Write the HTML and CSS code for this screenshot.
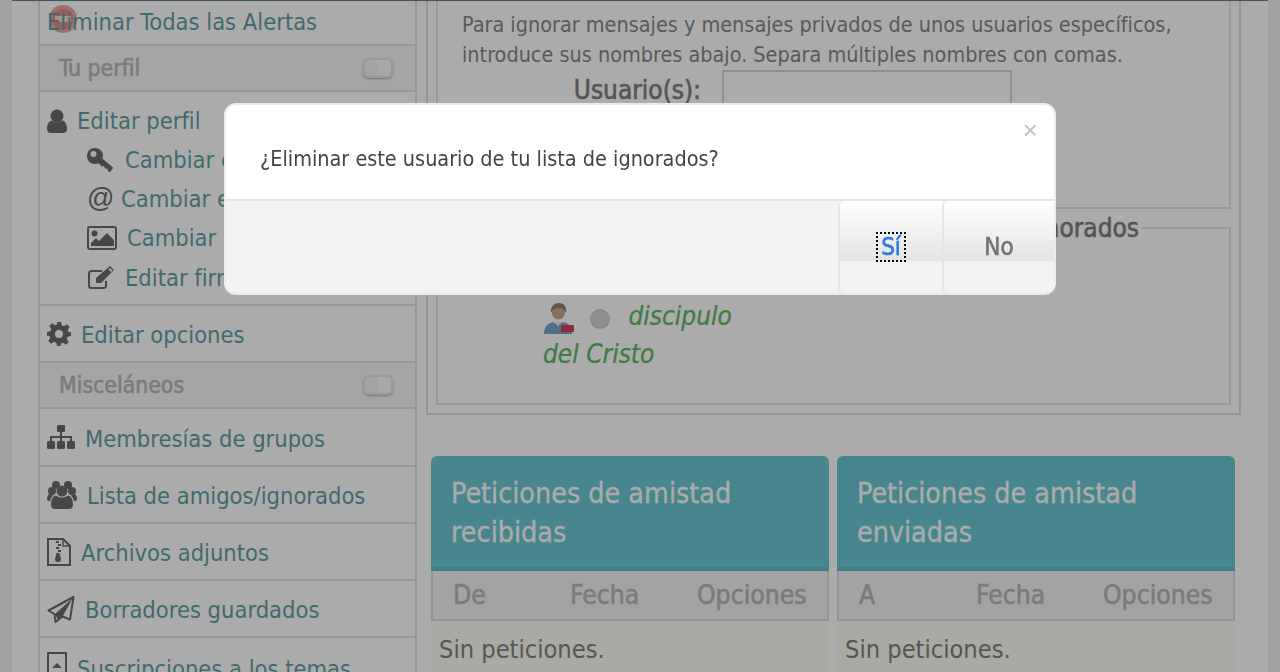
FILE: index.html
```html
<!DOCTYPE html>
<html lang="es">
<head>
  <meta charset="UTF-8" />
  <meta name="viewport" content="width=device-width, initial-scale=1.0" />
  <title>Lista de amigos/ignorados</title>
  <link rel="stylesheet" href="styles.css">
</head>
<body>
  <div class="page">
    <div class="layout">
      <aside class="sidebar">
        <div class="row first-row">
          <svg class="alert-icon" viewBox="0 0 28 28"><circle cx="14" cy="14" r="14" fill="#f0a9a0"/><circle cx="14" cy="14" r="10.500" fill="#e58c82"/><rect x="6" y="11" width="16" height="6" fill="#f6d8d4"/></svg>
          <a class="link">Eliminar Todas las Alertas</a>
        </div>
        <div class="section-head">
          <span>Tu perfil</span>
          <span class="toggle"></span>
        </div>
        <div class="row group">
          <div class="group-main">
            <svg class="icon" width="20" height="24" viewBox="0 0 20 24"><circle cx="10" cy="7" r="6.500"/><path d="M0 20c0-5 2-8 5-8.500 1.500 1.300 3 2 5 2s3.500-.7 5-2c3 .5 5 3.500 5 8.500 0 2.500-1.500 4-4 4H4c-2.500 0-4-1.500-4-4z"/></svg>
            <a class="link">Editar perfil</a>
          </div>
          <div class="sub sub-key">
            <svg class="icon" width="27" height="24" viewBox="0 0 27 24"><path fill-rule="evenodd" d="M8 0c4.500 0 8 3.200 8 7.500 0 1.100-.2 2-.6 2.900L26 19.500l-.5 1.500-2.500 3-1.500-.3-1.500-3.200-2 .2-1-2.600-2.300.3-3.200-3.200c-1 .5-2.200.8-3.500.8C3.500 16 0 12.500 0 8s3.500-8 8-8zM6.500 3a3 3 0 1 0 0 6 3 3 0 0 0 0-6z"/></svg>
            <a class="link">Cambiar contraseña</a>
          </div>
          <div class="sub">
            <span class="at">@</span>
            <a class="link">Cambiar email</a>
          </div>
          <div class="sub">
            <svg class="icon" width="30" height="24" viewBox="0 0 30 24"><rect x="1" y="1" width="28" height="22" rx="2" fill="none" stroke-width="2"/><circle cx="7.500" cy="7.500" r="3"/><path d="M4 20v-3l5-5 3 3 8-8 7 7v6z"/></svg>
            <a class="link">Cambiar avatar</a>
          </div>
          <div class="sub sub-last">
            <svg class="icon" width="28" height="24" viewBox="0 0 28 24"><path d="M19 15v4.500a2.500 2.500 0 0 1-2.500 2.500h-12A2.500 2.500 0 0 1 2 19.500v-12A2.500 2.500 0 0 1 4.500 5H15" fill="none" stroke-width="2"/><path d="M9 12l0 5 5 0L27 4l-4-4zM23 2l2.500 2.500-1.500 1.500-2.500-2.500z" fill-rule="evenodd"/></svg>
            <a class="link">Editar firma</a>
          </div>
        </div>
        <div class="row">
          <svg class="icon" width="24" height="24" viewBox="0 0 24 24"><path fill-rule="evenodd" d="M10 0h4l.7 3.300 2.300 1L20 2.300 22.700 5 20.700 8l1 2.300L24 10v4l-3.300.7-1 2.300 2 3-2.700 2.700-3-2-2.300 1L14 24h-4l-.7-3.300-2.300-1-3 2L1.300 19l2-3-1-2.300L0 14v-4l3.300-.7 1-2.300-2-3L5 1.300l3 2 2.300-1zM12 8a4 4 0 1 0 0 8 4 4 0 0 0 0-8z"/></svg>
          <a class="link">Editar opciones</a>
        </div>
        <div class="section-head">
          <span>Misceláneos</span>
          <span class="toggle"></span>
        </div>
        <div class="row row-tall">
          <svg class="icon" width="28" height="24" viewBox="0 0 28 24"><rect x="10" y="0" width="8" height="7" rx="1"/><rect x="0" y="16" width="8" height="8" rx="1.500"/><rect x="10" y="16" width="8" height="8" rx="1.500"/><rect x="20" y="16" width="8" height="8" rx="1.500"/><path d="M13 7h2v4h10v5h-2v-3h-8v3h-2v-3H5v3H3v-5h10z"/></svg>
          <a class="link">Membresías de grupos</a>
        </div>
        <div class="row">
          <svg class="icon" width="30" height="28" viewBox="0 0 30 28"><circle cx="5" cy="10" r="4"/><circle cx="25" cy="10" r="4"/><circle cx="9" cy="4" r="4"/><circle cx="21" cy="4" r="4"/><circle cx="15" cy="10" r="5.500"/><path d="M4 24c0-6 2-9 5-9.500 2 1.500 4 2 6 2s4-.5 6-2c3 .5 5 3.500 5 9.500 0 2.500-1.500 4-4 4H8c-2.500 0-4-1.500-4-4z"/><path d="M0 18c0-3 1.500-5 3-5 1 1 2 1.200 3 1.200C4.500 16 3.500 18 3.200 20 1 20 0 19.500 0 18zM30 18c0-3-1.500-5-3-5-1 1-2 1.200-3 1.200 1.500 1.800 2.500 3.800 2.800 5.800 2.200 0 3.200-.5 3.200-2z"/></svg>
          <a class="link">Lista de amigos/ignorados</a>
        </div>
        <div class="row">
          <svg class="icon" width="24" height="28" viewBox="0 0 24 28"><path d="M1 1h15l7 7v19H1z" fill="none" stroke-width="2"/><path d="M16 1v7h7" fill="none" stroke-width="1.500"/><path d="M9 3h3v2H9zM11 6h3v2h-3zM9 9h3v2H9zM11 12h3v2h-3zM9.500 15h3l1.500 6a3 3 0 0 1-6 0z"/></svg>
          <a class="link">Archivos adjuntos</a>
        </div>
        <div class="row">
          <svg class="icon" width="28" height="28" viewBox="0 0 28 28"><path d="M1.500 15.500L26.500 2 23 24.500 15.500 21.500 8.500 27 7.500 19z" fill="none" stroke-width="2" stroke-linejoin="round"/><path d="M8 19L25.500 3.500 15.500 21.500 11 25z"/></svg>
          <a class="link">Borradores guardados</a>
        </div>
        <div class="row last-row">
          <svg class="icon" width="20" height="28" viewBox="0 0 20 28"><path d="M1 1h18v26H1z" fill="none" stroke-width="2"/><path d="M10 11l5 5H5z"/></svg>
          <a class="link">Suscripciones a los temas</a>
        </div>
      </aside>

      <main class="content">
        <div class="outer-box">
          <fieldset class="box box-add">
            <p class="hint">Para ignorar mensajes y mensajes privados de unos usuarios específicos,<br>introduce sus nombres abajo. Separa múltiples nombres con comas.</p>
            <div class="user-field">
              <label class="user-label">Usuario(s):</label>
              <input class="user-input" type="text">
            </div>
          </fieldset>
          <fieldset class="box box-list">
            <legend class="box-legend">Usuarios ignorados</legend>
            <div class="ignored">
              <svg class="avatar" width="32" height="32" viewBox="0 0 32 32"><path d="M1 31c0-7 3-10 9-12l5 3 5-3c5 1 8 4 9 8v4z" fill="#7aa6d0"/><path d="M12 19l3 5 3-5z" fill="#eee"/><circle cx="15.500" cy="10" r="6.500" fill="#d0a488"/><path d="M8 10c-1-6 3-10 8-10s8 4 7 10c-2-4-4-5-7-5s-6 1-8 5z" fill="#8a8078"/><rect x="18" y="22" width="13" height="7" rx="1" fill="#d04050"/></svg>
              <span class="status"></span>
              <a class="ignored-name">discipulo<br>del Cristo</a>
            </div>
          </fieldset>
        </div>

        <div class="requests">
          <section class="panel">
            <h3 class="panel-title">Peticiones de amistad recibidas</h3>
            <div class="panel-cols">
              <span class="col-who">De</span><span class="col-date">Fecha</span><span class="col-opts">Opciones</span>
            </div>
            <div class="panel-body">Sin peticiones.</div>
          </section>
          <section class="panel">
            <h3 class="panel-title">Peticiones de amistad enviadas</h3>
            <div class="panel-cols">
              <span class="col-who">A</span><span class="col-date">Fecha</span><span class="col-opts">Opciones</span>
            </div>
            <div class="panel-body">Sin peticiones.</div>
          </section>
        </div>
      </main>
    </div>
  </div>

  <div class="overlay"></div>

  <div class="modal">
    <div class="modal-top">
      <span class="modal-close">×</span>
      <p class="modal-text">¿Eliminar este usuario de tu lista de ignorados?</p>
    </div>
    <div class="modal-actions">
      <button class="modal-btn btn-yes"><span class="focus-ring">Sí</span></button>
      <button class="modal-btn btn-no">No</button>
    </div>
  </div>
</body>
</html>
```

FILE: styles.css
```css
* { box-sizing: border-box; }
html, body { margin: 0; padding: 0; height: 672px; overflow: hidden; }
body { font-family: "DejaVu Sans Condensed", "DejaVu Sans", sans-serif; background-color: #f0f0f0; color: #868686; font-size: 23.5px; }

.page { margin: 0 12px; height: 672px; background-color: #fff; border-top: 1px solid #5f7d8c; overflow: hidden; }
.layout { display: flex; align-items: flex-start; padding-left: 27px; }

.sidebar { width: 379px; flex: none; margin-left: -1px; border-left: 2px solid #e2e2e2; border-right: 2px solid #e2e2e2; }
.row { position: relative; display: flex; align-items: center; gap: 10px; height: 57px; padding-left: 7px; border-bottom: 2px solid #e2e2e2; }
.row > .link { padding-top: 3px; }
.row-tall { height: 58px; }
.first-row { height: 45px; padding-bottom: 5px; }
.last-row { height: 60px; border-bottom: 0; align-items: flex-start; padding-top: 14px; }
.group { display: block; height: 214px; padding-top: 10px; }
.group-main { display: flex; align-items: center; gap: 10px; height: 38px; }
.sub { display: flex; align-items: center; gap: 10px; height: 39px; padding-left: 40px; }
.sub-key { gap: 11px; }
.sub-last { margin-top: 1px; }
.at { width: 24px; font-family: "Liberation Sans", sans-serif; font-size: 27px; color: #6b6b6b; line-height: 1; text-align: center; }
.link { color: #5e9fa3; white-space: nowrap; }
.icon { fill: #6b6b6b; stroke: none; flex: none; }
.icon [stroke-width] { stroke: #6b6b6b; }
.alert-icon { position: absolute; left: 9px; top: 4px; width: 28px; height: 28px; }
.first-row .link { position: relative; }

.section-head { display: flex; align-items: center; justify-content: space-between; height: 46px; padding: 0 22px 0 19px; background-color: #f6f6f6; border-bottom: 2px solid #e2e2e2; color: #b8b8b8; font-size: 22.8px; -webkit-text-stroke: 0.6px #b8b8b8; }
.toggle { width: 30px; height: 20px; border: 2px solid #e4e4e4; border-radius: 6px; background: linear-gradient(90deg, #f4f4f4 50%, #fbfbfb 50%); box-shadow: 0 1px 2px #aaa; }

.content { flex: 1; padding-left: 9px; width: 0; }
.outer-box { width: 815px; height: 424px; margin-top: -10px; padding: 0 8px; border: 2px solid #dcdcdc; }
.box { margin: 0; padding: 0; border: 2px solid #e4e4e4; min-width: 0; }
.box-add { height: 218px; margin-top: -2px; padding: 17px 24px 0; }
.box-list { position: relative; height: 192px; margin-top: 4px; padding: 0; }
.hint { margin: 0; line-height: 30px; font-size: 21.45px; }
.user-field { display: flex; align-items: flex-start; }
.user-label { width: 239px; text-align: right; font-size: 26px; color: #7f7f7f; padding-top: 5px; -webkit-text-stroke: 0.6px #7f7f7f; }
.user-input { width: 290px; height: 60px; margin-left: 21px; border: 2px solid #d4d4d4; background: #fff; }
.box-legend { margin-left: auto; margin-right: 88px; padding: 0 2px; font-size: 26px; color: #7f7f7f; -webkit-text-stroke: 0.6px #7f7f7f; }
.ignored { padding: 54px 0 0 105px; width: 320px; }
.avatar { vertical-align: middle; margin-right: 8px; }
.status { display: inline-block; width: 20px; height: 20px; margin-right: 12px; border-radius: 50%; background: #d4d4d4; vertical-align: middle; border: 2px solid #ccc; }
.ignored-name { color: #5cb860; font-style: italic; font-size: 26px; line-height: 38px; -webkit-text-stroke: 0.2px #5cb860; }

.requests { display: flex; gap: 8px; margin: 41px 0 0 5px; }
.panel { width: 398px; flex: none; }
.panel-title { margin: 0; padding: 18px 20px 0; height: 115px; background-color: #6ac8d1; border-radius: 6px 6px 0 0; border-bottom: 4px solid #62bbc3; color: #fff; font-weight: normal; font-size: 28.4px; line-height: 39px; -webkit-text-stroke: 0.3px #fff; }
.panel-cols { display: flex; align-items: center; height: 50px; border: 2px solid #dcdcdc; border-top: 0; background-color: #f4f4f4; color: #b8b8b8; font-size: 26.3px; padding: 0 20px; -webkit-text-stroke: 0.6px #b8b8b8; }
.col-who { width: 117px; flex: none; }
.col-date { width: 127px; flex: none; }
.panel-body { height: 70px; padding: 14px 8px; background-color: #fdfef4; font-size: 25.2px; color: #808080; }

.overlay { position: fixed; inset: 0; background: rgba(0, 0, 0, 0.33); }

.modal { position: fixed; left: 224px; top: 103px; width: 832px; height: 192px; border: 2px solid #ececec; border-radius: 12px; background: #f2f2f2; overflow: hidden; display: flex; flex-direction: column; }
.modal-top { position: relative; height: 96px; background: #fff; border-bottom: 2px solid #e5e5e5; flex: none; padding: 39px 34px 0; }
.modal-text { margin: 0; font-size: 21.45px; line-height: 30px; color: #444; }
.modal-close { position: absolute; top: 12px; right: 16px; font-family: "Liberation Sans", sans-serif; font-size: 26px; line-height: 1; color: #c4c4c4; }
.modal-actions { flex: 1; display: flex; justify-content: flex-end; }
.modal-btn { height: 92px; margin: 0; padding: 0; border: 0; border-left: 2px solid #e5e5e5; background: linear-gradient(#fff, #e4e4e4) no-repeat; background-size: 100% 60px; background-color: #f2f2f2; font-family: "DejaVu Sans Condensed", "DejaVu Sans", sans-serif; font-size: 24px; border-radius: 6px 0 0 6px; }
.btn-yes { width: 104px; color: #2a7ae2; -webkit-text-stroke: 0.6px #2a7ae2; }
.btn-no { width: 112px; color: #757575; -webkit-text-stroke: 0.6px #757575; }
.focus-ring { display: inline-flex; width: 26px; height: 26px; align-items: center; justify-content: center; outline: 2px dotted #000; }
```
